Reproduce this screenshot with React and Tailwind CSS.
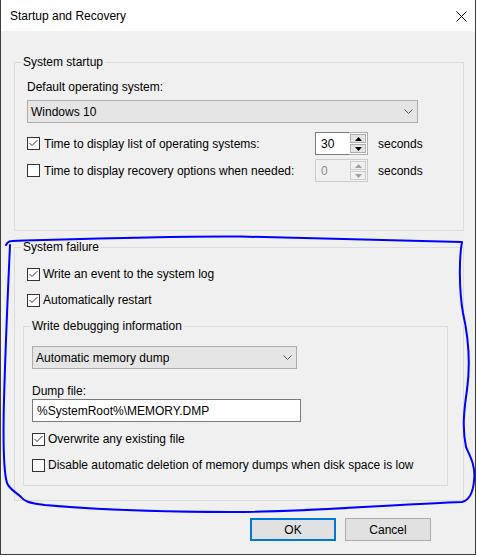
import React from "react";

const Check = ({ checked }) => (
  <span className="w-[13px] h-[13px] border border-[#333333] bg-white flex items-center justify-center shrink-0">
    {checked && (
      <svg width="11" height="11" viewBox="0 0 11 11">
        <path d="M1.5 5 L4 7.5 L9.5 2" stroke="#333333" strokeWidth="1" fill="none" />
      </svg>
    )}
  </span>
);

const Chevron = () => (
  <svg width="9" height="5" viewBox="0 0 9 5" className="shrink-0">
    <path d="M0.5 0.5 L4.5 4.5 L8.5 0.5" stroke="#555555" strokeWidth="1" fill="none" />
  </svg>
);

const Triangle = ({ up, color }) => (
  <svg width="7" height="4" viewBox="0 0 7 4">
    {up ? <path d="M0 4 L3.5 0 L7 4 Z" fill={color} /> : <path d="M0 0 L7 0 L3.5 4 Z" fill={color} />}
  </svg>
);

const SpinBox = ({ value, disabled }) => (
  <div className="flex w-[53px] h-[23px] shrink-0">
    <div
      className={
        disabled
          ? "flex-1 flex items-center pl-[5px] border-y border-l border-[#cccccc] bg-[#f0f0f0] text-[#8c8c8c]"
          : "flex-1 flex items-center pl-[5px] border-y border-l border-[#7a7a7a] bg-white"
      }
    >
      {value}
    </div>
    <div
      className={
        disabled
          ? "w-[19px] flex flex-col justify-between p-[1px] border-y border-r border-[#cccccc] bg-[#f0f0f0]"
          : "w-[19px] flex flex-col justify-between p-[1px] border-y border-r border-[#adadad] bg-white"
      }
    >
      <div
        className={
          disabled
            ? "h-[9px] flex items-center justify-center border border-[#cccccc] bg-[#f0f0f0]"
            : "h-[9px] flex items-center justify-center border border-[#adadad] bg-[#e5e5e5]"
        }
      >
        <Triangle up color={disabled ? "#a0a0a0" : "#000000"} />
      </div>
      <div
        className={
          disabled
            ? "h-[9px] flex items-center justify-center border border-[#cccccc] bg-[#f0f0f0]"
            : "h-[9px] flex items-center justify-center border border-[#adadad] bg-[#e5e5e5]"
        }
      >
        <Triangle color={disabled ? "#a0a0a0" : "#000000"} />
      </div>
    </div>
  </div>
);

const CheckRow = ({ checked, children }) => (
  <div className="flex items-center gap-[3px] h-[16px]">
    <Check checked={checked} />
    <span className="whitespace-nowrap">{children}</span>
  </div>
);

const App = () => {
  return (
    <div className="relative w-[477px] h-[557px] bg-white text-[12px] leading-[16px] text-black font-['Liberation_Sans',Arial,sans-serif]">
      <div className="w-[476px] h-[555px] border-x border-b border-[#3c3c3c] flex flex-col">
        {/* title bar */}
        <div className="h-[31px] shrink-0 bg-white flex items-center justify-between pl-[9px] pr-[8px]">
          <span>Startup and Recovery</span>
          <svg width="11" height="11" viewBox="0 0 11 11" className="mt-[1px]">
            <path d="M0.5 0.5 L10.5 10.5 M10.5 0.5 L0.5 10.5" stroke="#000000" strokeWidth="1" />
          </svg>
        </div>

        {/* content */}
        <div className="flex-1 bg-[#f0f0f0] pl-[13px] pr-[11px] pt-[23px] flex flex-col">
          {/* system startup */}
          <fieldset className="h-[177px] border border-[#dcdcdc] pl-[6px]">
            <legend className="px-[2px]">System startup</legend>
            <div className="pl-[6px] flex flex-col">
              <div className="mt-[9px]">Default operating system:</div>
              <div className="mt-[5px] w-[391px] h-[23px] bg-[#e5e5e5] border border-[#adadad] flex items-center justify-between pl-[3px] pr-[4px]">
                <span>Windows 10</span>
                <Chevron />
              </div>
              <div className="mt-[9px] h-[23px] flex items-center">
                <div className="w-[288px] flex items-center gap-[4px]">
                  <Check checked />
                  <span>Time to display list of operating systems:</span>
                </div>
                <SpinBox value="30" />
                <span className="ml-[10px]">seconds</span>
              </div>
              <div className="mt-[4px] h-[23px] flex items-center">
                <div className="w-[288px] flex items-center gap-[4px]">
                  <Check />
                  <span>Time to display recovery options when needed:</span>
                </div>
                <SpinBox value="0" disabled />
                <span className="ml-[10px]">seconds</span>
              </div>
            </div>
          </fieldset>

          {/* system failure */}
          <fieldset className="mt-[8px] h-[262px] border border-[#dcdcdc] pl-[6px]">
            <legend className="px-[2px]">System failure</legend>
            <div className="flex flex-col">
              <div className="pl-[6px] mt-[11px]">
                <CheckRow checked>Write an event to the system log</CheckRow>
              </div>
              <div className="pl-[6px] mt-[10px]">
                <CheckRow checked>Automatically restart</CheckRow>
              </div>

              {/* write debugging information */}
              <fieldset className="mt-[10px] ml-[2px] w-[425px] h-[168px] border border-[#dcdcdc] pl-[6px]">
                <legend className="px-[2px]">Write debugging information</legend>
                <div className="pl-[2px] flex flex-col">
                  <div className="mt-[12px] w-[265px] h-[23px] bg-[#e5e5e5] border border-[#adadad] flex items-center justify-between pl-[3px] pr-[4px]">
                    <span>Automatic memory dump</span>
                    <Chevron />
                  </div>
                  <div className="mt-[15px] h-[15px] leading-[15px]">Dump file:</div>
                  <div className="w-[269px] h-[23px] bg-white border border-[#7a7a7a] flex items-center pl-[4px]">
                    %SystemRoot%\MEMORY.DMP
                  </div>
                  <div className="mt-[9px]">
                    <CheckRow checked>Overwrite any existing file</CheckRow>
                  </div>
                  <div className="mt-[10px]">
                    <CheckRow>Disable automatic deletion of memory dumps when disk space is low</CheckRow>
                  </div>
                </div>
              </fieldset>
            </div>
          </fieldset>

          {/* buttons */}
          <div className="mt-[17px] flex justify-end gap-[9px] pr-[33px]">
            <button className="w-[86px] h-[23px] bg-[#e1e1e1] border-2 border-[#0078d7] flex items-center justify-center">
              OK
            </button>
            <button className="w-[86px] h-[23px] bg-[#e1e1e1] border border-[#adadad] flex items-center justify-center">
              Cancel
            </button>
          </div>
        </div>
      </div>

      {/* hand-drawn annotation */}
      <svg
        className="absolute top-0 left-0 pointer-events-none"
        width="477"
        height="557"
        viewBox="0 0 477 557"
      >
        <path
          d="M6 245 C7 243 9 241 12 241 C80 239 160 236 240 236.5 C320 238 400 241 462 242 C459 258 459 290 463 313 C468 335 471 360 467 390 C464 410 462 428 466 447 C470 456 476 466 474 481 C473 492 470 500 462 502 C400 504 310 512 233 512 C150 512 90 509 45 505 C28 503 24 501 21 497 C16 492 10 490 7 483 C3 470 3 440 4 400 C6 330 8 290 10 245"
          stroke="#0000ff"
          strokeWidth="2"
          fill="none"
          strokeLinejoin="round"
          strokeLinecap="round"
        />
      </svg>
    </div>
  );
};

export default App;
